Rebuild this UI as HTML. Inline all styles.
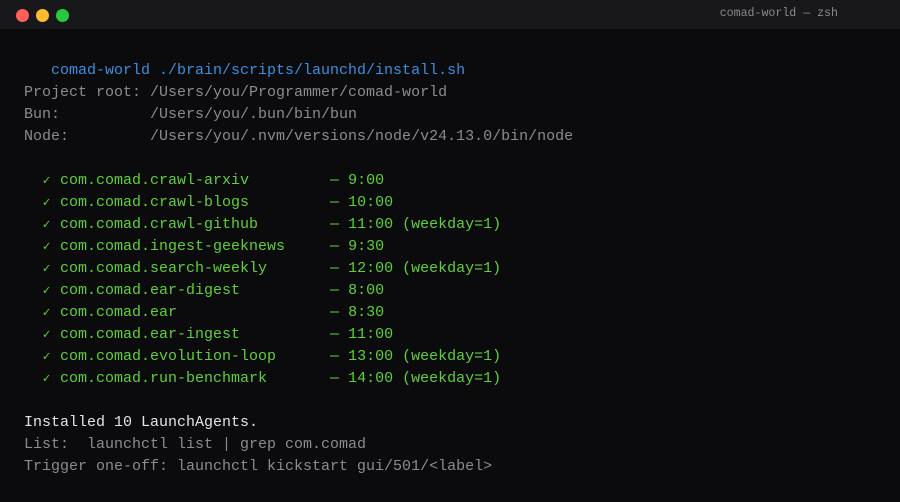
<!DOCTYPE html>
<html><head><meta charset="utf-8"><style>
html,body{margin:0;padding:0;}
body{width:900px;height:502px;background:#0b0b0d;overflow:hidden;position:relative;font-family:"Liberation Mono",monospace;}
.bar{position:absolute;left:0;top:0;width:900px;height:29px;background:#18181b;}
.dot{position:absolute;top:9px;width:13px;height:13px;border-radius:50%;}
.title{position:absolute;right:62px;top:7px;font-size:11.6px;color:#8a8a8e;white-space:pre;}
.l{position:absolute;left:24px;font-size:15px;letter-spacing:0;white-space:pre;line-height:22px;}
.g{color:#5fd03a}.b{color:#3d8fe0}.w{color:#e4e4e4}.d{color:#8c8c8f}
.ck{display:inline-block;width:9px;font-size:13px;text-align:center}
</style></head><body>
<div class="bar">
<div class="dot" style="left:16px;background:#fe5f57"></div>
<div class="dot" style="left:36px;background:#febc2e"></div>
<div class="dot" style="left:56px;background:#28c840"></div>
<div class="title">comad-world — zsh</div>
</div>
<div class="l b" style="top:60px">   comad-world ./brain/scripts/launchd/install.sh</div>
<div class="l d" style="top:82px">Project root: /Users/you/Programmer/comad-world</div>
<div class="l d" style="top:104px">Bun:          /Users/you/.bun/bin/bun</div>
<div class="l d" style="top:126px">Node:         /Users/you/.nvm/versions/node/v24.13.0/bin/node</div>
<div class="l g" style="top:170px">  <span class="ck">✓</span> com.comad.crawl-arxiv         — 9:00</div>
<div class="l g" style="top:192px">  <span class="ck">✓</span> com.comad.crawl-blogs         — 10:00</div>
<div class="l g" style="top:214px">  <span class="ck">✓</span> com.comad.crawl-github        — 11:00 (weekday=1)</div>
<div class="l g" style="top:236px">  <span class="ck">✓</span> com.comad.ingest-geeknews     — 9:30</div>
<div class="l g" style="top:258px">  <span class="ck">✓</span> com.comad.search-weekly       — 12:00 (weekday=1)</div>
<div class="l g" style="top:280px">  <span class="ck">✓</span> com.comad.ear-digest          — 8:00</div>
<div class="l g" style="top:302px">  <span class="ck">✓</span> com.comad.ear                 — 8:30</div>
<div class="l g" style="top:324px">  <span class="ck">✓</span> com.comad.ear-ingest          — 11:00</div>
<div class="l g" style="top:346px">  <span class="ck">✓</span> com.comad.evolution-loop      — 13:00 (weekday=1)</div>
<div class="l g" style="top:368px">  <span class="ck">✓</span> com.comad.run-benchmark       — 14:00 (weekday=1)</div>
<div class="l w" style="top:412px">Installed 10 LaunchAgents.</div>
<div class="l d" style="top:434px">List:  launchctl list | grep com.comad</div>
<div class="l d" style="top:456px">Trigger one-off: launchctl kickstart gui/501/&lt;label&gt;</div>
</body></html>
